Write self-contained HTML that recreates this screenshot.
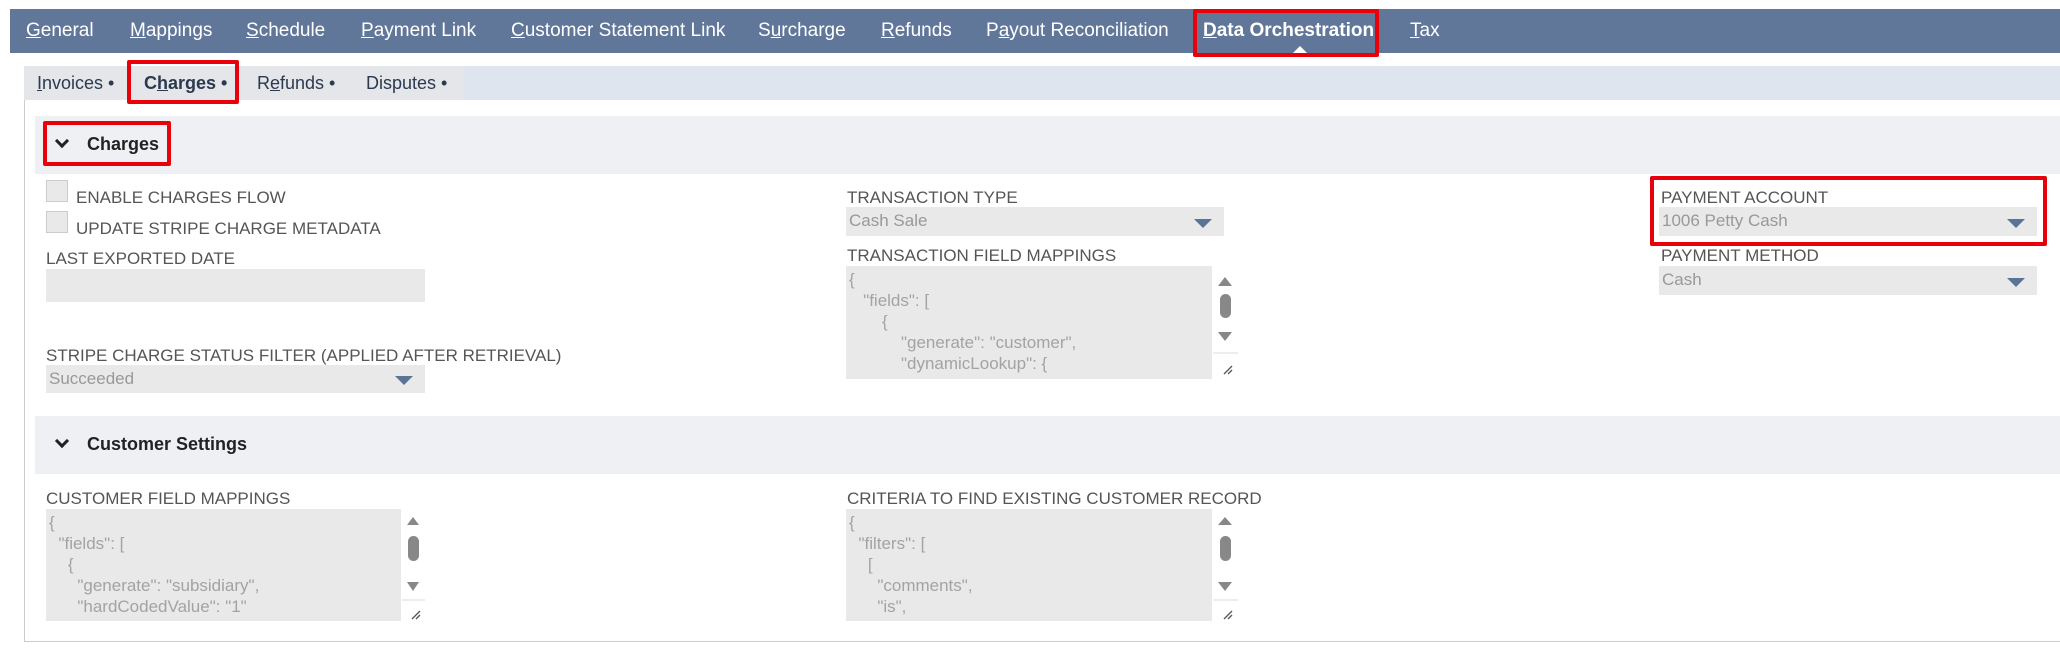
<!DOCTYPE html>
<html><head><meta charset="utf-8"><style>
*{box-sizing:border-box;margin:0;padding:0}
body{width:2060px;height:650px;background:#fff;font-family:"Liberation Sans",Arial,sans-serif;position:relative;overflow:hidden}
.a{position:absolute}
.nav{left:10px;top:9px;width:2050px;height:44px;background:#607799}
.nav span{position:absolute;top:11px;color:#fff;font-size:19px;white-space:nowrap}
.sub{left:24px;top:66px;width:2036px;height:34px;background:#dfe5ee}
.sub2{left:24px;top:66px;width:440px;height:34px;background:#e4e6ea}
.sub span{position:absolute;top:7px;font-size:18px;color:#2b3a4e;white-space:nowrap}
.panel{left:24px;top:100px;width:2040px;height:542px;border:1px solid #ccc;border-top:none}
.hdr{background:#eef0f4;height:58px;left:35px;width:2025px}
.hdr b{position:absolute;left:52px;top:18px;font-size:18px;color:#222}
.chev{position:absolute;left:22px;top:20px;width:10px;height:10px;border-right:3px solid #222;border-bottom:3px solid #222;transform:rotate(45deg)}
.lbl{font-size:17px;color:#555;white-space:nowrap}
.sel{background:#e9e9e9;color:#999;font-size:17px;padding:4px 3px}
.tri{position:absolute;right:12px;top:50%;margin-top:-3px;width:0;height:0;border-left:9px solid transparent;border-right:9px solid transparent;border-top:9px solid #5a7397}
.ta{background:#e9e9e9;color:#a3a3a3;font-size:17px;line-height:21px;padding:3px 3px;overflow:hidden;white-space:pre}
.red{border:4px solid #e8000b;border-radius:2px}
.cb{width:22px;height:22px;background:#e9e9e9;border:1px solid #ccc}
</style></head><body>
<div class="a nav">
<span style="left:16px"><u>G</u>eneral</span>
<span style="left:120px"><u>M</u>appings</span>
<span style="left:236px"><u>S</u>chedule</span>
<span style="left:351px"><u>P</u>ayment Link</span>
<span style="left:501px"><u>C</u>ustomer Statement Link</span>
<span style="left:748px">S<u>u</u>rcharge</span>
<span style="left:871px"><u>R</u>efunds</span>
<span style="left:976px">P<u>a</u>yout Reconciliation</span>
<span style="left:1193px;font-weight:bold"><u>D</u>ata Orchestration</span>
<span style="left:1400px"><u>T</u>ax</span>
<div style="position:absolute;left:1283px;top:37px;width:0;height:0;border-left:7px solid transparent;border-right:7px solid transparent;border-bottom:7px solid #fff"></div>
</div>
<div class="a red" style="left:1193px;top:9px;width:186px;height:48px"></div>
<div class="a sub"></div>
<div class="a sub sub2">
<span style="left:13px"><u>I</u>nvoices •</span>
<span style="left:120px;font-weight:bold">C<u>h</u>arges •</span>
<span style="left:233px">R<u>e</u>funds •</span>
<span style="left:342px">Disputes •</span>
</div>
<div class="a red" style="left:127px;top:60px;width:112px;height:44px"></div>
<div class="a panel"></div>

<div class="a hdr" style="top:116px"><span class="chev"></span><b>Charges</b></div>
<div class="a red" style="left:43px;top:121px;width:128px;height:45px"></div>

<div class="a cb" style="left:46px;top:180px"></div>
<div class="a lbl" style="left:76px;top:188px">ENABLE CHARGES FLOW</div>
<div class="a cb" style="left:46px;top:211px"></div>
<div class="a lbl" style="left:76px;top:219px">UPDATE STRIPE CHARGE METADATA</div>
<div class="a lbl" style="left:46px;top:249px">LAST EXPORTED DATE</div>
<div class="a sel" style="left:46px;top:269px;width:379px;height:33px"></div>
<div class="a lbl" style="left:46px;top:346px">STRIPE CHARGE STATUS FILTER (APPLIED AFTER RETRIEVAL)</div>
<div class="a sel" style="left:46px;top:365px;width:379px;height:28px">Succeeded<span class="tri"></span></div>

<div class="a lbl" style="left:847px;top:188px">TRANSACTION TYPE</div>
<div class="a sel" style="left:846px;top:207px;width:378px;height:29px">Cash Sale<span class="tri"></span></div>
<div class="a lbl" style="left:847px;top:246px">TRANSACTION FIELD MAPPINGS</div>
<div class="a ta" style="left:846px;top:266px;width:366px;height:113px">{
   "fields": [
       {
           "generate": "customer",
           "dynamicLookup": {</div>
<svg class="a" style="left:1212px;top:266px" width="26" height="113"><path d="M6 20 L13 11 L20 20Z" fill="#888"/><rect x="8" y="28" width="11" height="24" rx="5.5" fill="#888"/><path d="M6 66 L13 75 L20 66Z" fill="#888"/><line x1="1" y1="87" x2="26" y2="87" stroke="#ddd"/><path d="M12 108 L20 100 M16 108 L20 104" stroke="#555" stroke-width="1.3"/></svg>

<div class="a red" style="left:1650px;top:176px;width:397px;height:70px"></div>
<div class="a lbl" style="left:1661px;top:188px">PAYMENT ACCOUNT</div>
<div class="a sel" style="left:1659px;top:207px;width:378px;height:29px">1006 Petty Cash<span class="tri"></span></div>
<div class="a lbl" style="left:1661px;top:246px">PAYMENT METHOD</div>
<div class="a sel" style="left:1659px;top:266px;width:378px;height:29px">Cash<span class="tri"></span></div>

<div class="a hdr" style="top:416px"><span class="chev"></span><b>Customer Settings</b></div>

<div class="a lbl" style="left:46px;top:489px">CUSTOMER FIELD MAPPINGS</div>
<div class="a ta" style="left:46px;top:509px;width:355px;height:112px">{
  "fields": [
    {
      "generate": "subsidiary",
      "hardCodedValue": "1"</div>
<svg class="a" style="left:401px;top:509px" width="24" height="112"><path d="M6 16 L12 8 L18 16Z" fill="#888"/><rect x="7" y="27" width="11" height="25" rx="5.5" fill="#888"/><path d="M6 73 L12 82 L18 73Z" fill="#888"/><line x1="1" y1="91" x2="24" y2="91" stroke="#ddd"/><path d="M11 110 L19 102 M15 110 L19 106" stroke="#555" stroke-width="1.3"/></svg>

<div class="a lbl" style="left:847px;top:489px">CRITERIA TO FIND EXISTING CUSTOMER RECORD</div>
<div class="a ta" style="left:846px;top:509px;width:366px;height:112px">{
  "filters": [
    [
      "comments",
      "is",</div>
<svg class="a" style="left:1212px;top:509px" width="26" height="112"><path d="M6 16 L13 8 L20 16Z" fill="#888"/><rect x="8" y="27" width="11" height="25" rx="5.5" fill="#888"/><path d="M6 73 L13 82 L20 73Z" fill="#888"/><line x1="1" y1="91" x2="26" y2="91" stroke="#ddd"/><path d="M12 110 L20 102 M16 110 L20 106" stroke="#555" stroke-width="1.3"/></svg>
</body></html>
